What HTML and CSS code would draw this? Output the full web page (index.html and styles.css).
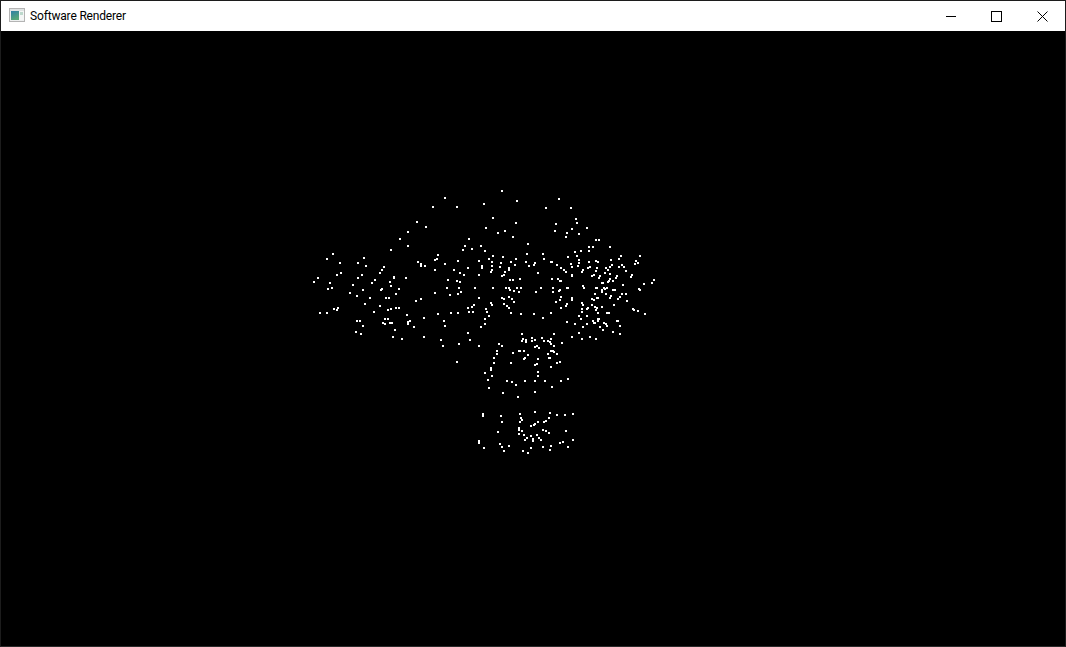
FILE: index.html
```html
<!DOCTYPE html>
<html lang="en">
<head>
<meta charset="utf-8">
<title>Software Renderer</title>
<link rel="stylesheet" href="styles.css">
</head>
<body>
<div class="window">
  <header class="titlebar">
    <svg class="app-icon" width="16" height="14" viewBox="0 0 16 14" aria-hidden="true">
      <defs>
        <linearGradient id="pane" x1="0" y1="0" x2="0.4" y2="1">
          <stop class="stop-top" offset="0"/>
          <stop class="stop-bottom" offset="1"/>
        </linearGradient>
      </defs>
      <rect class="icon-frame" x="0.5" y="0.5" width="15" height="13"/>
      <rect class="icon-head" x="1" y="1" width="14" height="2"/>
      <rect class="icon-pane" x="2" y="3" width="8" height="9" fill="url(#pane)"/>
      <rect class="icon-side" x="10" y="3" width="5" height="9"/>
      <rect class="icon-side-mark" x="11" y="4" width="3" height="3"/>
    </svg>
    <span class="title">Software Renderer</span>
    <div class="controls">
      <div class="control">
        <svg width="11" height="11" viewBox="0 0 11 11" aria-hidden="true"><path class="glyph" d="M1 5.5H11"/></svg>
      </div>
      <div class="control">
        <svg width="11" height="11" viewBox="0 0 11 11" aria-hidden="true"><path class="glyph" d="M0.5 0.5H10.5V10.5H0.5Z"/></svg>
      </div>
      <div class="control">
        <svg class="glyph-aa" width="11" height="11" viewBox="0 0 11 11" aria-hidden="true"><path class="glyph" d="M0.5 0.5L10.5 10.5M10.5 0.5L0.5 10.5"/></svg>
      </div>
    </div>
  </header>
  <canvas id="view" class="viewport" width="1064" height="615"></canvas>
</div>
<script src="script.js"></script>
</body>
</html>
```
FILE: styles.css
```css
html, body {
  margin: 0;
  padding: 0;
  background: #000;
}
body {
  width: 1066px;
  height: 647px;
  overflow: hidden;
}
.window {
  box-sizing: border-box;
  width: 1066px;
  height: 647px;
  display: flex;
  flex-direction: column;
  border: 1px solid #1c1c1c;
  border-bottom-color: #2a2a2a;
  background: #000;
}
.titlebar {
  flex: 0 0 30px;
  display: flex;
  align-items: flex-start;
  background: #fff;
  padding-left: 8px;
}
.app-icon {
  flex: none;
  display: block;
  margin-top: 7px;
}
.icon-frame { fill: #eef0f0; stroke: #b4b4b4; stroke-width: 1; }
.icon-head { fill: #dfe3e3; }
.stop-top { stop-color: #2f7fa6; }
.stop-bottom { stop-color: #58a878; }
.icon-side { fill: #f4f6f6; }
.icon-side-mark { fill: #bcd8cc; }
.title {
  margin: 7px 0 0 5px;
  font: 12px/16px Roboto, "Open Sans", sans-serif;
  letter-spacing: -0.17px;
  color: #000;
  white-space: nowrap;
}
.controls {
  margin-left: auto;
  display: flex;
  height: 100%;
}
.control {
  box-sizing: border-box;
  width: 46px;
  padding-left: 18px;
  display: flex;
  align-items: center;
}
.glyph {
  fill: none;
  stroke: #000;
  stroke-width: 1;
  shape-rendering: crispEdges;
}
.glyph-aa .glyph {
  shape-rendering: auto;
}
.viewport {
  display: block;
  flex: none;
  width: 1064px;
  height: 615px;
  background: #000;
}
```
FILE: script.js
```js
// Point cloud, in 3x coordinates of three tiles of the frame: [originX, originY, x, y, ...]
var tiles = [
  [300, 180, [471,546,435,54,399,81,471,81,351,126,378,141,324,156,300,177,507,177,495,198,324,198,489,210,516,207,273,210,414,225,99,222,81,237,192,234,405,240,411,237,354,246,363,252,363,258,375,258,474,243,537,243,120,249,174,249,198,258,435,252,252,261,246,270,405,270,462,270,504,264,240,279,123,279,111,285,186,285,480,279,492,285,537,285,54,294,174,294,282,291,282,294,318,294,42,306,225,300,444,300,471,303,480,306,90,309,270,306,216,309,159,315,273,318,84,327,96,324,246,327,243,330,189,330,297,327,441,324,477,324,525,324,150,339,288,342,405,339,483,336,474,342,450,345,171,348,258,354,267,354,210,354,363,357,348,363,537,354,195,372,522,375,516,381,504,384,240,378,288,384,297,384,273,387,264,390,102,387,114,384,111,390,60,399,81,399,222,396,414,402,453,399,474,399,507,396,519,396,321,405,372,414,255,417,264,417,171,423,180,423,432,423,330,423,324,426,324,432,249,429,255,432,270,429,276,429,189,438,342,441,435,438,285,450,168,456,183,462,504,459,279,471,372,471,306,477,423,480,510,480,477,492,429,498,537,498]],
  [480, 180, [66,33,237,57,111,63,12,72,198,84,273,84,39,114,288,117,108,129,291,129,228,132,18,144,321,144,225,153,276,147,75,153,54,159,261,159,297,162,99,171,258,171,348,180,357,180,144,192,3,198,327,201,339,201,390,201,15,213,327,213,303,213,285,216,141,222,189,222,39,228,291,228,69,231,264,231,423,228,480,228,27,237,108,237,192,237,297,240,393,240,417,237,36,246,93,246,138,246,213,246,216,246,297,249,327,246,348,243,354,246,468,243,63,249,165,249,162,255,105,255,474,249,465,252,147,258,231,255,273,252,36,258,294,258,396,255,426,255,6,258,6,264,60,261,87,264,87,270,243,264,276,261,324,264,330,261,351,264,390,261,417,261,432,261,378,264,384,270,36,270,33,276,75,276,252,270,258,276,309,270,306,276,348,273,438,273,174,279,375,279,390,282,72,285,66,288,276,285,276,288,342,285,336,288,360,288,357,294,411,288,408,294,456,285,453,291,90,300,99,300,120,297,216,297,234,297,240,303,243,303,390,297,387,303,384,306,399,303,522,300,366,309,369,309,516,309,492,312,429,315,309,318,312,324,39,324,78,324,87,324,90,330,111,324,123,324,183,324,219,324,261,324,264,324,351,324,348,324,372,324,375,327,381,324,366,330,366,336,399,330,405,330,477,327,480,330,102,333,117,336,168,336,219,336,240,330,237,333,345,342,378,342,426,342,438,342,393,348,390,354,420,351,414,357,87,351,66,354,72,357,96,357,243,351,276,354,276,360,351,354,354,354,336,357,342,360,240,360,441,363,102,366,228,366,33,369,36,375,72,372,306,369,309,375,261,372,258,378,402,375,336,375,81,378,87,384,243,384,366,381,345,381,351,384,348,390,324,384,321,387,306,387,18,387,459,387,462,390,474,393,21,396,93,399,123,402,162,402,213,399,306,396,354,399,381,399,387,399,495,402,27,408,297,408,321,408,189,414,303,417,15,417,354,417,357,417,411,423,414,423,339,423,342,429,345,429,354,423,261,426,321,432,372,429,378,432,381,438,285,432,15,432,3,441,309,441,360,441,420,438,369,450,399,456,297,459,420,462,126,462,222,462,276,471,330,471,186,474,156,474,306,477,348,477,129,477,126,483,138,480,138,486,156,483,165,480,192,483,204,483,213,477,210,486,213,492,57,492,66,498,222,498,246,489,165,501,171,498,177,504,51,513,117,513,120,513,132,513,213,513,219,513,222,516,51,522,99,519,204,522,231,522,144,525,135,534,132,537,42,534,207,534,210,534,174,537]],
  [460, 330, [153,99,102,99,225,105,231,102,291,99,300,96,273,111,75,129,93,114,93,120,234,126,234,138,96,138,84,150,141,153,156,156,195,153,225,153,255,153,303,153,324,147,168,165,87,174,276,171,129,189,225,186,174,201,225,246,180,252,69,252,69,258,123,258,270,249,291,255,315,255,339,252,183,264,267,264,126,276,180,276,186,270,234,276,252,276,258,273,222,285,225,282,213,288,177,294,177,300,186,303,249,300,258,303,318,303,114,306,267,309,177,312,192,315,213,318,231,315,201,324,237,324,219,327,219,333,243,330,195,330,339,330,57,333,57,339,309,336,300,339,120,342,126,351,147,348,249,351,273,348,324,351,213,354,72,354,132,363,189,363,270,360,204,369]]
];
var ctx = document.getElementById('view').getContext('2d');
ctx.fillStyle = '#fff';
tiles.forEach(function (tile) {
  var pts = tile[2];
  for (var i = 0; i < pts.length; i += 2) {
    var x = tile[0] + Math.round((pts[i] - 3) / 3);
    var y = tile[1] + Math.round((pts[i + 1] - 3) / 3);
    // canvas sits inside the 1px window border and under the 30px title bar
    ctx.fillRect(x - 1, y - 31, 2, 2);
  }
});
```
